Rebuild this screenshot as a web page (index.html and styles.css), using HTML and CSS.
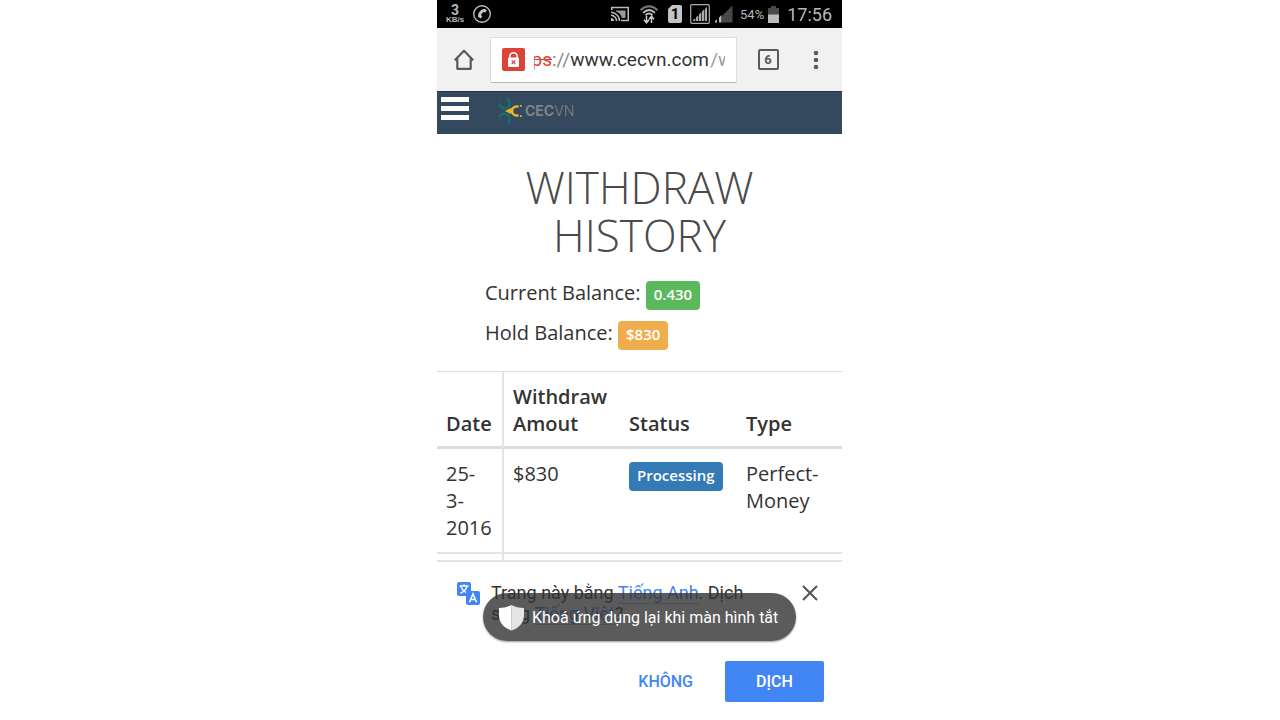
FILE: index.html
```html
<!DOCTYPE html>
<html lang="vi">
<head>
<meta charset="utf-8">
<meta name="viewport" content="width=device-width, initial-scale=1">
<title>Withdraw History</title>
<link rel="stylesheet" href="styles.css">
</head>
<body>
<div class="phone">
  <div class="status">
    <div class="status-left">
      <div class="speed"><span class="speed-num">3</span><span class="speed-unit">KB/s</span></div>
      <svg class="icon" width="20" height="20" viewBox="0 0 20 20"><circle cx="10" cy="10" r="8.3" fill="none" stroke="#bbb" stroke-width="1.4"/><path d="M12.500 4.800l2.300 1.500-1.200 2.200-2-.5c-1.200.8-2 1.800-2.500 3l1.200 1.600-1.600 2-2.500-1.500C5.500 9.200 8.300 5.500 12.500 4.800z" fill="#c4c4c4"/></svg>
    </div>
    <div class="status-right">
      <svg class="icon cast" width="18" height="16" viewBox="0 0 18 16"><path d="M.7 4V1.500h16.600v13H10" fill="none" stroke="#bbb" stroke-width="1.600"/><path d="M5 4.500h9.500v7.500H11C10 8.500 8 6.500 5 5.500z" fill="#999"/><path d="M0 6.300A8.700 8.700 0 0 1 8.500 15M0 9.300A5.700 5.700 0 0 1 5.500 15" fill="none" stroke="#bbb" stroke-width="1.500"/><path d="M0 12a3 3 0 0 1 3 3H0z" fill="#bbb"/></svg>
      <svg class="icon" width="20" height="20" viewBox="0 0 20 20"><g fill="none" stroke-width="1.900"><path d="M1.500 6.200Q10-1.500 18.500 6.200" stroke="#777"/><path d="M4 8.900Q10 3.300 16 8.900" stroke="#bbb"/><path d="M6.500 11.300Q10 7.900 13.500 11.300" stroke="#bbb"/></g><path d="M7.500 12v6M5 15.800l2.500 3 2.500-3M12.500 19v-6M10 15.200l2.500-3 2.500 3" fill="none" stroke="#ccc" stroke-width="1.500"/></svg>
      <div class="sim">1</div>
      <svg class="icon boxed" width="20" height="20" viewBox="0 0 20 20"><rect x=".7" y=".7" width="18.600" height="18.600" rx="1" fill="none" stroke="#aaa" stroke-width="1.200"/><path d="M3 17L17 3v14z" fill="#333"/><g fill="#aaa"><path d="M3 17v-1l2-1.500V17zM6 17v-3.500l2-2V17zM9 17v-6.500l2-2V17zM12 17V7.500l2-2V17zM15 17V5l2-2v14z"/></g></svg>
      <svg class="icon signal" width="18" height="18" viewBox="0 0 18 18"><path d="M7 17.500V11L17.500 .5v17z" fill="#484848"/><path d="M0 17.500V16l2-1.500v3zM4 17.500v-5L6.500 10v7.500z" fill="#bbb"/></svg>
      <span class="percent">54%</span>
      <svg class="icon battery" width="11" height="17" viewBox="0 0 11 17"><path d="M0 2h3V0h5v2h3v7H0z" fill="#4a4a4a"/><path d="M0 8.500h11V17H0z" fill="#bcbcbc"/></svg>
      <span class="clock">17:56</span>
    </div>
  </div>

  <div class="toolbar">
    <button class="tool home" aria-label="Home"><svg class="icon" width="20" height="22" viewBox="0 0 20 22"><path d="M.8 11.200L10 1.800l9.200 9.400M3.300 9.500v10.300h13.400V9.500" fill="none" stroke="#5a5a5a" stroke-width="2.200" stroke-linejoin="round"/></svg></button>
    <div class="address">
      <svg class="icon" width="23" height="23" viewBox="0 0 23 23"><rect width="23" height="23" rx="2" fill="#db4437"/><path d="M7.800 10V8.500a3.700 3.700 0 0 1 7.400 0V10" fill="none" stroke="#fff" stroke-width="1.500"/><rect x="6" y="9.500" width="11" height="9.500" rx="1" fill="#fff"/><path d="M9.700 12.500l3.600 3.600M13.300 12.500l-3.600 3.600" stroke="#db4437" stroke-width="1.200"/></svg>
      <span class="scheme"><s>ps</s></span><span class="dim">://</span><input class="host" type="text" value="www.cecvn.com" aria-label="Address"><span class="path">/w</span>
    </div>
    <button class="tool tabs" aria-label="Tabs"><span class="tab-count">6</span></button>
    <button class="tool more" aria-label="Menu"><svg class="icon" width="6" height="20" viewBox="0 0 6 20"><g fill="#5a5a5a"><circle cx="3" cy="3" r="2.300"/><circle cx="3" cy="10" r="2.300"/><circle cx="3" cy="17" r="2.300"/></g></svg></button>
  </div>

  <nav class="navbar">
    <button class="burger" aria-label="Navigation"><svg class="icon" width="28" height="24" viewBox="0 0 28 24"><path d="M0 0h28v5H0zM0 9h28v5H0zM0 18h28v5H0z" fill="#fff"/></svg></button>
    <a class="logo" href="#">
      <svg class="icon" width="27" height="28" viewBox="0 0 27 30"><g fill="none" stroke="#14706c" stroke-width="2.500"><path d="M1.500 8C3.500 14 12 13.500 12.500 6.500Q12.500 3 10 1.200"/><path d="M1.500 22C3.500 16 12 16.500 12.500 23.500Q12.500 27 10 28.800"/></g><circle cx="1.500" cy="5" r="1" fill="#14706c"/><circle cx="1.500" cy="25" r="1" fill="#14706c"/><path d="M7.500 15l7-3.500v7z" fill="#e8b22a"/><path d="M22 10.200H20a4.800 4.800 0 0 0 0 9.600h2" fill="none" stroke="#efb82c" stroke-width="2.700"/><path d="M23.500 8.500h2v2h-2zM23.500 19.500h2v2h-2z" fill="#efb82c"/></svg>
      <span class="brand"><b>CEC</b>VN</span>
    </a>
  </nav>

  <main class="page">
    <h1 class="title">WITHDRAW HISTORY</h1>
    <div class="balances">
      <div class="balance">Current Balance: <span class="label green">0.430</span></div>
      <div class="balance">Hold Balance: <span class="label orange">$830</span></div>
    </div>
    <table class="history">
      <thead>
        <tr><th class="c-date">Date</th><th class="c-amount">Withdraw Amout</th><th class="c-status">Status</th><th class="c-type">Type</th></tr>
      </thead>
      <tbody>
        <tr><td>25-<br>3-<br>2016</td><td>$830</td><td><span class="label blue">Processing</span></td><td>Perfect-<br>Money</td></tr>
        <tr><td></td><td></td><td></td><td></td></tr>
      </tbody>
    </table>
  </main>

  <section class="translate">
    <div class="message">
      <svg class="icon" width="23" height="24" viewBox="0 0 23 24"><rect width="14" height="14" rx="2" fill="#4285f4"/><path d="M2.500 4h9M7 2.300V4M4 4.500c1 3 3.500 5.500 6.500 6.700M10 4.500c-1 3-3.500 5.500-6.700 6.700" fill="none" stroke="#fff" stroke-width="1.300"/><rect x="9" y="9" width="14" height="14" rx="2" fill="#4285f4"/><path d="M12.500 20.300l3.500-8.300 3.500 8.300M13.700 17.500h4.600" fill="none" stroke="#fff" stroke-width="1.600"/></svg>
      <p class="text">Trang này bằng <a href="#">Tiếng Anh</a>. Dịch sang <a href="#">Tiếng Việt</a>?</p>
      <button class="close" aria-label="Close"><svg class="icon" width="16" height="16" viewBox="0 0 16 16"><path d="M1 1l14 14M15 1L1 15" stroke="#555" stroke-width="2.100"/></svg></button>
    </div>
    <div class="actions">
      <button class="action">KHÔNG</button>
      <button class="action primary">DỊCH</button>
    </div>
    <div class="toast" role="status">
      <svg class="icon" width="25" height="27" viewBox="0 0 25 27"><path d="M12.500 1Q18 4 25 4v7c0 8-5 13-12.500 15.500z" fill="#e4e4e4"/><path d="M12.500 1Q7 4 0 4v7c0 8 5 13 12.500 15.500z" fill="#fff"/></svg>
      <span>Khoá ứng dụng lại khi màn hình tắt</span>
    </div>
  </section>
</div>
</body>
</html>
```
FILE: styles.css
```css
* { box-sizing: border-box; }
body {
  margin: 0;
  padding-right: 1px;
  background: #fff;
  font-family: "Open Sans", sans-serif;
  color: #333;
}
button { border: 0; padding: 0; background: none; font: inherit; cursor: pointer; }
.icon { display: block; flex: none; }
.phone {
  display: flex;
  flex-direction: column;
  max-width: 405px;
  height: 100vh;
  margin: 0 auto;
  overflow: hidden;
}

.status {
  display: flex;
  flex: none;
  justify-content: space-between;
  align-items: center;
  height: 28px;
  padding: 0 10px 0 9px;
  background: #000;
  color: #b8b8b8;
  font-family: Roboto, sans-serif;
}
.status-left, .status-right { display: flex; align-items: center; }
.status-left { gap: 8px; }
.speed { display: flex; flex-direction: column; align-items: center; font-weight: 700; }
.speed-num { font-size: 14px; line-height: 12px; }
.speed-unit { font-family: "Liberation Sans", sans-serif; font-size: 8px; line-height: 8px; }
.cast { margin-right: 10px; }
.sim {
  width: 14px;
  height: 18px;
  margin: 0 8px 0 9px;
  border-radius: 2px;
  background: #c4c4c4;
  color: #000;
  font-size: 15px;
  font-weight: 700;
  line-height: 18px;
  text-align: center;
  clip-path: polygon(4px 0, 100% 0, 100% 100%, 0 100%, 0 4px);
}
.signal { margin: 0 7px 0 5px; }
.percent { margin-right: 4px; font-size: 13px; }
.battery { margin-right: 8px; }
.clock { font-size: 18px; }

.toolbar {
  display: flex;
  flex: none;
  align-items: center;
  height: 63px;
  padding-right: 9px;
  background: #f1f1f1;
}
.tool { display: flex; flex: none; align-items: center; justify-content: center; height: 48px; }
.home { width: 53px; }
.tabs { width: 62px; }
.more { width: 34px; }
.tab-count {
  width: 21px;
  height: 21px;
  border: 2px solid #5a5a5a;
  border-radius: 2px;
  color: #5a5a5a;
  font-family: Roboto, sans-serif;
  font-size: 13px;
  font-weight: 700;
  line-height: 17px;
}
.address {
  display: flex;
  flex: 1;
  align-items: center;
  min-width: 0;
  height: 46px;
  padding: 0 11px;
  border: 1px solid #ddd;
  border-bottom-color: #b5b5b5;
  border-radius: 2px;
  background: #fff;
  font-family: Roboto, sans-serif;
  font-size: 19px;
  line-height: 26px;
}
.scheme {
  display: flex;
  flex: none;
  justify-content: flex-end;
  width: 18px;
  margin-left: 9px;
  overflow: hidden;
  color: #db4437;
}
.dim { flex: none; color: #888; }
.host {
  flex: none;
  width: 140px;
  padding: 0;
  border: 0;
  outline: 0;
  background: none;
  color: #333;
  font: inherit;
}
.path { flex: 1; min-width: 0; overflow: hidden; color: #999; }

.navbar {
  display: flex;
  flex: none;
  align-items: flex-start;
  height: 43px;
  padding: 5px 4px;
  border-top: 1px solid #26384a;
  background: #34495e;
}
.burger { display: flex; }
.logo { display: flex; align-items: center; gap: 1px; margin-left: 28px; color: #818385; text-decoration: none; }
.brand { font-family: Inter, sans-serif; font-size: 14px; font-weight: 300; line-height: 28px; }
.brand b { font-weight: 700; }

.page { flex: 1; min-height: 0; overflow: hidden; }
.title {
  max-width: 300px;
  margin: 29px auto 15px;
  color: #4a4a4a;
  font-size: 44px;
  font-weight: 300;
  line-height: 48px;
  text-align: center;
}
.balances { padding-left: 48px; font-size: 20px; }
.balance { height: 40px; line-height: 38px; }
.label {
  display: inline-block;
  height: 29px;
  padding: 0 8px;
  border-radius: 4px;
  color: #fff;
  font-size: 15px;
  font-weight: 600;
  line-height: 27px;
}
.green { background: #5cb85c; }
.orange { background: #f0ad4e; }
.blue { background: #337ab7; }
.history {
  width: 100%;
  margin-top: 17px;
  border-collapse: separate;
  border-spacing: 0;
  table-layout: fixed;
  font-size: 20px;
  line-height: 27px;
}
.history th, .history td { height: 28px; padding: 11px 9px; text-align: left; border-bottom: 2px solid #e4e4e4; }
.history th { padding-bottom: 9px; border-top: 1px solid #ddd; border-bottom: 3px solid #ddd; font-weight: 600; vertical-align: bottom; }
.history td { vertical-align: top; }
.history th:first-child, .history td:first-child { border-right: 2px solid #e4e4e4; padding-right: 0; }
.c-date { width: 67px; }
.c-amount { width: 116px; }
.c-status { width: 117px; }

.translate {
  position: relative;
  flex: none;
  padding: 20px 18px 18px 20px;
  border-top: 2px solid #e4e4e4;
  background: #fff;
  font-family: Roboto, sans-serif;
}
.message { display: flex; align-items: flex-start; }
.text { flex: 1; margin: 0 40px 0 11px; font-size: 18px; line-height: 21px; }
.text a { color: #4285f4; text-decoration: none; border-bottom: 1px solid #9dc0f9; }
.close { display: flex; margin: 3px 6px 0 0; }
.actions { display: flex; justify-content: flex-end; align-items: center; margin-top: 37px; }
.action { height: 41px; padding: 0 32px; border-radius: 2px; color: #4285f4; font-size: 16px; font-weight: 500; line-height: 42px; }
.primary { width: 99px; padding: 0; background: #4285f4; color: #fff; }
.toast {
  position: absolute;
  top: 31px;
  left: 46px;
  right: 46px;
  display: flex;
  align-items: center;
  gap: 8px;
  height: 48px;
  padding-left: 16px;
  border-radius: 24px;
  background: rgba(50, 50, 50, 0.8);
  box-shadow: 0 1px 2px rgba(0, 0, 0, 0.4);
  color: #fff;
  font-size: 16px;
  white-space: nowrap;
}
```
